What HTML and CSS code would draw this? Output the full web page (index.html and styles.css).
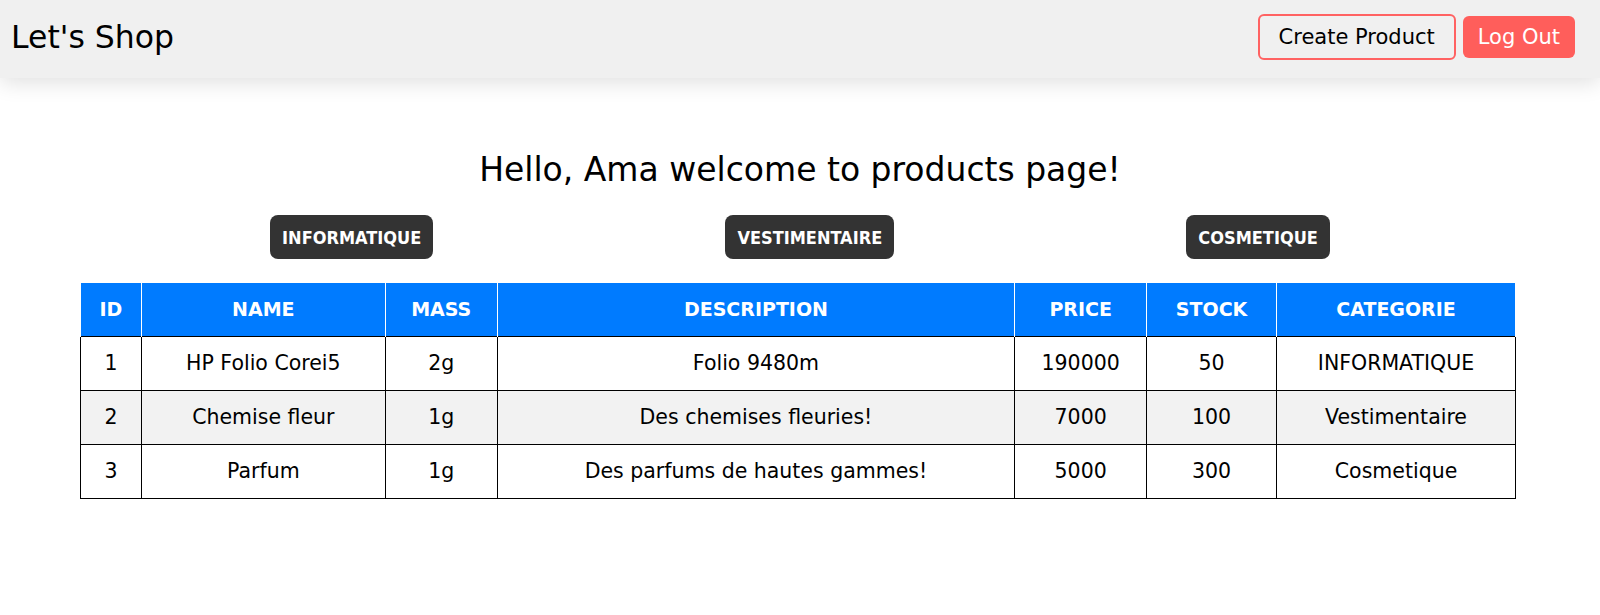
FILE: index.html
```html
<!DOCTYPE html>
<html lang="en">
<head>
<meta charset="utf-8">
<title>Let's Shop</title>
<link rel="stylesheet" href="styles.css">
</head>
<body>
<nav class="navbar">
  <div class="brand">Let's Shop</div>
  <div class="actions">
    <button class="btn-outline">Create Product</button>
    <button class="btn-danger">Log Out</button>
  </div>
</nav>
<main class="content">
  <h1 class="welcome">Hello, Ama welcome to products page!</h1>
  <div class="categories">
    <button class="cat-btn">INFORMATIQUE</button>
    <button class="cat-btn">VESTIMENTAIRE</button>
    <button class="cat-btn">COSMETIQUE</button>
  </div>
  <table class="products">
    <thead>
      <tr>
        <th class="c-id">ID</th>
        <th class="c-name">NAME</th>
        <th class="c-mass">MASS</th>
        <th class="c-desc">DESCRIPTION</th>
        <th class="c-price">PRICE</th>
        <th class="c-stock">STOCK</th>
        <th class="c-cat">CATEGORIE</th>
      </tr>
    </thead>
    <tbody>
      <tr>
        <td>1</td><td>HP Folio Corei5</td><td>2g</td><td>Folio 9480m</td><td>190000</td><td>50</td><td>INFORMATIQUE</td>
      </tr>
      <tr class="alt">
        <td>2</td><td>Chemise fleur</td><td>1g</td><td>Des chemises fleuries!</td><td>7000</td><td>100</td><td>Vestimentaire</td>
      </tr>
      <tr>
        <td>3</td><td>Parfum</td><td>1g</td><td>Des parfums de hautes gammes!</td><td>5000</td><td>300</td><td>Cosmetique</td>
      </tr>
    </tbody>
  </table>
</main>
</body>
</html>
```
FILE: styles.css
```css
* { box-sizing: border-box; }
body {
  margin: 0;
  font-family: "DejaVu Sans", "Open Sans", sans-serif;
  color: #000;
  background: #fff;
}
.navbar {
  height: 78px;
  background: #f0f0f0;
  display: flex;
  align-items: center;
  justify-content: space-between;
  padding: 0 25px 4px 11px;
  box-shadow: 0 5px 20px rgba(0, 0, 0, 0.12);
  position: relative;
}
.brand {
  font-size: 31.5px;
  font-weight: 400;
}
.actions {
  display: flex;
  align-items: center;
  gap: 7px;
}
.actions button {
  font-family: inherit;
  font-size: 21px;
  font-weight: 400;
  cursor: pointer;
}
.btn-outline {
  height: 46px;
  padding: 0 19px;
  background: transparent;
  border: 2px solid #ff6262;
  border-radius: 6px;
  color: #000;
}
.btn-danger {
  height: 42px;
  padding: 0 15px;
  background: #ff5e5b;
  border: none;
  border-radius: 6px;
  color: #fff;
}
.content {
  padding-top: 68px;
}
.welcome {
  margin: 0;
  text-align: center;
  font-size: 33px;
  font-weight: 400;
  line-height: 48px;
}
.categories {
  display: flex;
  justify-content: space-around;
  padding: 0 124px;
  margin-top: 21px;
}
.cat-btn {
  height: 44px;
  padding: 0 12px;
  background: #333;
  color: #fff;
  border: none;
  border-radius: 8px;
  font-family: "DejaVu Sans", sans-serif;
  font-stretch: condensed;
  font-weight: bold;
  font-size: 18px;
}
.products {
  width: 1436px;
  margin: 24px 0 0 80px;
  border-collapse: collapse;
  text-align: center;
}
.products th {
  height: 53px;
  background: #007bff;
  color: #fff;
  font-size: 19px;
  font-weight: bold;
  border-left: 1px solid #fff;
  border-right: 1px solid #fff;
  padding: 0;
}
.products td {
  height: 54px;
  border: 1px solid #000;
  font-size: 20.5px;
  padding: 0;
}
.products tr.alt td { background: #f2f2f2; }
.c-id { width: 61px; }
.c-name { width: 244px; }
.c-mass { width: 112px; }
.c-desc { width: 518px; }
.c-price { width: 132px; }
.c-stock { width: 130px; }
.c-cat { width: 239px; }
```
